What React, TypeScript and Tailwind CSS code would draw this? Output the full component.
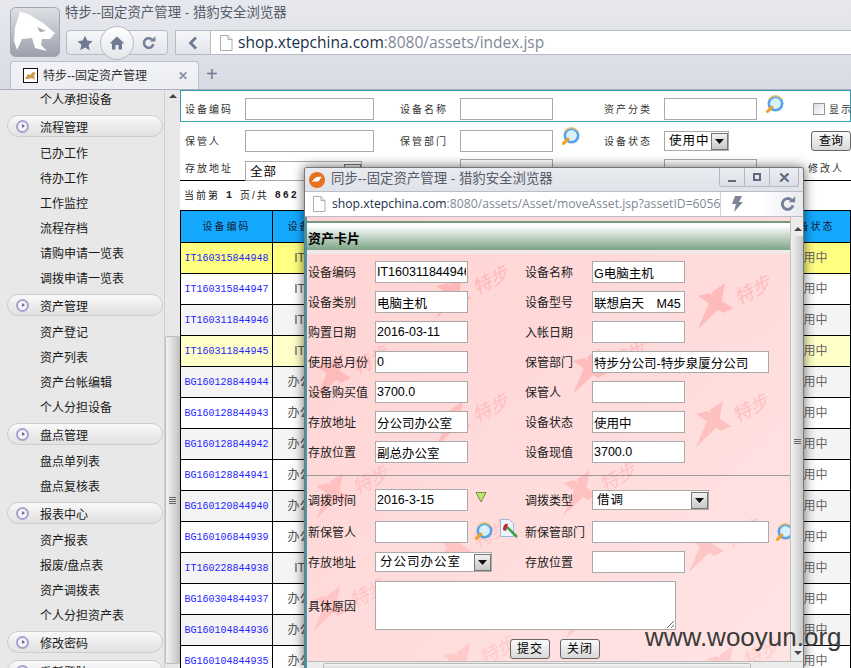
import { ReactNode } from "react";

const sidebar: { group?: boolean; label: string }[] = [
  { label: "个人承担设备" },
  { group: true, label: "流程管理" },
  { label: "已办工作" },
  { label: "待办工作" },
  { label: "工作监控" },
  { label: "流程存档" },
  { label: "请购申请一览表" },
  { label: "调拨申请一览表" },
  { group: true, label: "资产管理" },
  { label: "资产登记" },
  { label: "资产列表" },
  { label: "资产台帐编辑" },
  { label: "个人分担设备" },
  { group: true, label: "盘点管理" },
  { label: "盘点单列表" },
  { label: "盘点复核表" },
  { group: true, label: "报表中心" },
  { label: "资产报表" },
  { label: "报废/盘点表" },
  { label: "资产调拨表" },
  { label: "个人分担资产表" },
  { group: true, label: "修改密码" },
  { group: true, label: "重新登陆" },
];

const rows = [
  { id: "IT160315844948", type: "IT设备", bg: "bg-[#ffff80]" },
  { id: "IT160315844947", type: "IT设备", bg: "bg-white" },
  { id: "IT160311844946", type: "IT设备", bg: "bg-[#f4f4f4]" },
  { id: "IT160311844945", type: "IT设备", bg: "bg-[#ffffc8]" },
  { id: "BG160128844944", type: "办公设备", bg: "bg-[#f4f4f4]" },
  { id: "BG160128844943", type: "办公设备", bg: "bg-white" },
  { id: "BG160128844942", type: "办公设备", bg: "bg-[#f4f4f4]" },
  { id: "BG160128844941", type: "办公设备", bg: "bg-white" },
  { id: "BG160120844940", type: "办公设备", bg: "bg-[#f4f4f4]" },
  { id: "BG160106844939", type: "办公设备", bg: "bg-white" },
  { id: "IT160228844938", type: "IT设备", bg: "bg-[#f4f4f4]" },
  { id: "BG160304844937", type: "办公设备", bg: "bg-white" },
  { id: "BG160104844936", type: "办公设备", bg: "bg-[#f4f4f4]" },
  { id: "BG160104844935", type: "办公设备", bg: "bg-white" },
];

const marks = [
  [490, 280], [752, 290], [627, 355], [370, 360], [490, 408], [750, 408], [370, 480],
  [617, 477], [490, 533], [743, 533], [367, 593], [620, 600], [497, 650], [760, 653],
];

function FileIcon() {
  return (
    <svg width="14" height="16" viewBox="0 0 14 16" className="shrink-0">
      <path d="M1.5.5h7.5l4 4v11h-11.500z" fill="#fff" stroke="#a9adb6" />
      <path d="M9 .5v4h4" fill="#e8e9ed" stroke="#a9adb6" />
    </svg>
  );
}

function ReloadIcon({ size = 20 }: { size?: number }) {
  return (
    <svg width={size} height={size} viewBox="0 0 20 20">
      <path d="M15.500 11.500a6 6 0 1 1-1.800-6" fill="none" stroke="#75809a" strokeWidth="3.200" />
      <path d="M11 8h7V1.500z" fill="#75809a" />
    </svg>
  );
}

function SearchIcon() {
  return (
    <svg width="18" height="18" viewBox="0 0 18 18" className="shrink-0">
      <circle cx="9.500" cy="8.500" r="8" fill="#5aa2e8" />
      <circle cx="9.500" cy="8.500" r="5.400" fill="#d8f0fc" />
      <path d="M3 4a8 8 0 0 1 13 .5" fill="none" stroke="#f4c860" strokeWidth="1.300" />
      <path d="M6 12 1.500 16.500" stroke="#f0a020" strokeWidth="3" strokeLinecap="round" />
    </svg>
  );
}

function ArrowBox() {
  return (
    <span className="flex h-[17px] w-[17px] shrink-0 items-center justify-center border border-[#777] bg-gradient-to-b from-[#f2f2f2] to-[#c8c8c8]">
      <svg width="9" height="5" viewBox="0 0 9 5">
        <path d="M0 0h9L4.500 5z" fill="#111" />
      </svg>
    </span>
  );
}

function Select({ value, className }: { value: string; className: string }) {
  return (
    <div className={`flex items-center justify-between border border-[#aaa] bg-white pl-[4px] text-[12.500px] text-black ${className}`}>
      <span className="tracking-[1px]">{value}</span>
      <ArrowBox />
    </div>
  );
}

function FilterLabel({ children }: { children: ReactNode }) {
  return <span className="text-[10px] tracking-[2px] whitespace-nowrap text-[#333]">{children}</span>;
}

function FilterInput({ className = "w-[93px]" }: { className?: string }) {
  return <input readOnly className={`h-[22px] border border-[#aaa] bg-white ${className}`} />;
}

function Field({ value = "", className = "w-[93px]" }: { value?: string; className?: string }) {
  return (
    <input
      readOnly
      value={value}
      className={`h-[22px] border border-[#aaa] bg-white px-px text-[12.500px] text-black ${className}`}
    />
  );
}

function FormLabel({ children }: { children: ReactNode }) {
  return <span className="pt-[2px] text-[12px] whitespace-nowrap text-[#222]">{children}</span>;
}

function FormRow({ a, b, c, d }: { a: string; b: ReactNode; c: string; d: ReactNode }) {
  return (
    <div className="grid h-[30px] grid-cols-[67px_150px_67px_1fr] items-center">
      <FormLabel>{a}</FormLabel>
      <div className="flex items-center">{b}</div>
      <FormLabel>{c}</FormLabel>
      <div className="flex items-center">{d}</div>
    </div>
  );
}

function Button({ children }: { children: ReactNode }) {
  return (
    <button className="h-[20px] w-[40px] rounded-[3px] border border-[#666] bg-gradient-to-b from-[#fbfbfb] to-[#d8d8d8] text-[12px] tracking-[1px] text-black">
      {children}
    </button>
  );
}

function Sidebar() {
  return (
    <aside className="flex w-[180px] shrink-0 bg-[#e8e8e8]">
      <div className="w-[164px] shrink-0 overflow-hidden text-[12px] text-[#1a1a1a]">
        <div className="-mt-[4px]">
          {sidebar.map((s) =>
            s.group ? (
              <div key={s.label} className="pt-[4px] pb-[3px] pl-[7px]">
                <div className="flex h-[22px] w-[156px] items-center rounded-full border border-[#cdcdcd] bg-gradient-to-b from-[#fafafa] via-[#ececec] to-[#e2e2e2] pl-[8px]">
                  <span className="flex h-[13px] w-[13px] items-center justify-center rounded-full border-2 border-[#a8a2cf] bg-[#f4f4f8]">
                    <span className="ml-[1px] h-0 w-0 border-y-[2.500px] border-l-[3px] border-y-transparent border-l-[#6d6790]" />
                  </span>
                  <span className="ml-[11px] pt-[3px]">{s.label}</span>
                </div>
              </div>
            ) : (
              <div key={s.label} className="flex h-[25px] items-center pt-[2px] pl-[40px]">
                {s.label}
              </div>
            ),
          )}
        </div>
      </div>
      <div className="flex w-[16px] shrink-0 flex-col items-center border-l border-[#cfcfcf]">
        <div className="mt-[4px] h-0 w-0 border-x-[4px] border-b-[4px] border-x-transparent border-b-[#444]" />
        <div className="mt-[238px] flex h-[328px] w-[15px] flex-col items-center justify-center gap-[1px] rounded-[2px] border border-[#bdbdbd] bg-gradient-to-r from-[#f4f4f4] to-[#c4c4c4]">
          <span className="h-px w-[7px] bg-[#666]" />
          <span className="h-px w-[7px] bg-[#666]" />
          <span className="h-px w-[7px] bg-[#666]" />
          <span className="h-px w-[7px] bg-[#666]" />
        </div>
      </div>
    </aside>
  );
}

function Filters() {
  const grid = "grid grid-cols-[60px_155px_60px_144px_60px_149px_1fr] items-center";
  return (
    <div>
      <div className={`${grid} h-[32px] border border-[#3b9cb0] pt-[6px] pl-[4px]`}>
        <FilterLabel>设备编码</FilterLabel>
        <FilterInput className="w-[129px]" />
        <FilterLabel>设备名称</FilterLabel>
        <FilterInput />
        <FilterLabel>资产分类</FilterLabel>
        <div className="flex items-start gap-[9px]">
          <FilterInput />
          <div className="-mt-[3px]"><SearchIcon /></div>
        </div>
        <div className="flex items-center gap-[4px]">
          <span className="h-[12px] w-[12px] border border-[#999] bg-gradient-to-br from-[#ddd] to-white" />
          <FilterLabel>显示</FilterLabel>
        </div>
      </div>
      <div className={`${grid} h-[33px] pt-[5px] pl-[5px]`}>
        <FilterLabel>保管人</FilterLabel>
        <FilterInput className="w-[129px]" />
        <FilterLabel>保管部门</FilterLabel>
        <div className="flex items-start gap-[9px]">
          <FilterInput />
          <div className="-mt-[3px]"><SearchIcon /></div>
        </div>
        <FilterLabel>设备状态</FilterLabel>
        <Select value="使用中" className="h-[20px] w-[65px]" />
        <button className="ml-[-2px] h-[20px] w-[40px] rounded-[3px] border border-[#666] bg-gradient-to-b from-[#fbfbfb] to-[#d8d8d8] text-[12px] text-black">
          查询
        </button>
      </div>
      <div className={`${grid} h-[26px] items-end border-b border-black pl-[5px]`}>
        <div className="mb-[2px]"><FilterLabel>存放地址</FilterLabel></div>
        <Select value="全部" className="h-[20px] w-[117px] pt-[2px]" />
        <span />
        <FilterInput />
        <span />
        <FilterInput />
        <div className="mb-[2px] -ml-[5px]"><FilterLabel>修改人</FilterLabel></div>
      </div>
    </div>
  );
}

function AssetTable() {
  return (
    <table className="w-[671px] table-fixed border-collapse font-['Liberation_Sans','Noto_Sans_CJK_SC',sans-serif]">
      <colgroup>
        <col className="w-[92px]" />
        <col className="w-[78px]" />
        <col />
        <col className="w-[80px]" />
      </colgroup>
      <thead>
        <tr className="h-[32px] bg-[#14a9ff] text-[10px] tracking-[2px] text-[#123]">
          <th className="border border-black font-normal">设备编码</th>
          <th className="border border-black font-normal">设备名称</th>
          <th className="border border-black font-normal">规格型号</th>
          <th className="border border-black font-normal">设备状态</th>
        </tr>
      </thead>
      <tbody>
        {rows.map((r) => (
          <tr key={r.id} className={`h-[31px] text-center text-[12px] ${r.bg}`}>
            <td className="border border-black font-['Liberation_Mono',monospace] text-[10px] text-[#2424ff]">{r.id}</td>
            <td className="border border-black text-[#555]">{r.type}</td>
            <td className="border border-black" />
            <td className="border border-black pr-[2px] text-[#666]">使用中</td>
          </tr>
        ))}
      </tbody>
    </table>
  );
}

function Watermarks() {
  return (
    <svg className="absolute top-0 left-0" width="500" height="452" viewBox="306 216 500 452">
      {marks.map(([x, y]) => (
        <g key={`${x}-${y}`} transform={`translate(${x} ${y})`} fill="#ffa8a8" opacity={0.7 - ((y - 216) / 452) * 0.35}>
          <path d="M-55 5-44 2-20 17-30 22z" />
          <path d="M-41 1-28-8-32 13-40 8z" />
          <path d="M-44 12-55 38-34 18z" />
          <text
            transform="rotate(-28)"
            textAnchor="middle"
            x="0"
            y="6"
            fontSize="19"
            fontStyle="italic"
            fontFamily="Noto Sans CJK SC, sans-serif"
          >
            特步
          </text>
        </g>
      ))}
    </svg>
  );
}

function Popup() {
  return (
    <div className="absolute top-[167px] left-[304px] flex h-[501px] w-[500px] flex-col overflow-hidden rounded-t-[3px] border-x border-t border-[#777] bg-[#e5e7ec] shadow-[0_0_12px_rgba(0,0,0,0.6)]">
      <div className="flex h-[23px] shrink-0 items-center bg-gradient-to-b from-[#e9ebf0] to-[#e0e3e9]">
        <svg width="16" height="16" viewBox="0 0 16 16" className="ml-[4px]">
          <circle cx="8" cy="8" r="8" fill="#e8711d" />
          <path d="M3 10c2-5 6-6 10-5-2 1-2 3-3 4-2 1-4 0-7 1z" fill="#fff" />
        </svg>
        <span className="ml-[6px] text-[13.400px] whitespace-nowrap text-[#555b68]">同步--固定资产管理 - 猎豹安全浏览器</span>
        <div className="mr-[4px] ml-auto flex h-[19px] -translate-y-[2px] items-center rounded-b-[3px] border border-t-0 border-[#b4b8c2] bg-gradient-to-b from-[#eceef2] to-[#dcdfe6] text-[#5f6a80]">
          <span className="flex h-full w-[25px] items-end justify-center border-r border-[#b4b8c2] pb-[4px]">
            <span className="h-[2px] w-[8px] bg-[#5f6a80]" />
          </span>
          <span className="flex h-full w-[25px] items-center justify-center border-r border-[#b4b8c2]">
            <span className="h-[8px] w-[8px] border-2 border-[#5f6a80]" />
          </span>
          <span className="flex h-full w-[28px] items-center justify-center text-[15px] leading-none font-bold">✕</span>
        </div>
      </div>
      <div className="flex h-[26px] shrink-0 items-center border-y border-[#b9bdc7] bg-white pl-[7px]">
        <FileIcon />
        <div className="ml-[6px] w-[388px] overflow-hidden text-[12.200px] whitespace-nowrap font-['Open_Sans',sans-serif]">
          <span className="text-[#20304a]">shop.xtepchina.com</span>
          <span className="text-[#808898]">:8080/assets/Asset/moveAsset.jsp?assetID=6056</span>
        </div>
        <div className="flex h-full flex-1 items-center border-l border-[#d0d3da] bg-gradient-to-r from-white via-white to-[#e8eaef] pl-[10px]">
          <svg width="12" height="16" viewBox="0 0 12 16">
            <path d="M4 0h7L8 6h4L3 16l2-8H1z" fill="#7d8596" />
          </svg>
          <div className="mr-[6px] ml-auto"><ReloadIcon size={18} /></div>
        </div>
      </div>
      <div className="relative min-h-0 flex-1 overflow-hidden border-l-2 border-[#3b9cb0] bg-gradient-to-br from-[#ffd3d3] to-[#ffe4e4]">
        <Watermarks />
        <div className="relative flex h-full">
          <div className="w-[483px] shrink-0 text-[12px]">
            <div className="mt-[4px] flex h-[33px] items-end border-t-2 border-b-4 border-[#6f9a7c] border-b-[#f2e8e8] bg-gradient-to-b from-white from-10% to-[#7da487] pb-[2px] pl-[1px] text-[13px] font-bold text-black">
              资产卡片
            </div>
            <div className="mt-[3px] pl-[1px]">
              <FormRow a="设备编码" b={<Field value="IT160311844946" />} c="设备名称" d={<Field value="G电脑主机" />} />
              <FormRow a="设备类别" b={<Field value="电脑主机" />} c="设备型号" d={<Field value="联想启天　M45" />} />
              <FormRow a="购置日期" b={<Field value="2016-03-11" />} c="入帐日期" d={<Field />} />
              <FormRow a="使用总月份" b={<Field value="0" />} c="保管部门" d={<Field value="特步分公司-特步泉厦分公司" className="w-[177px]" />} />
              <FormRow a="设备购买值" b={<Field value="3700.0" />} c="保管人" d={<Field />} />
              <FormRow a="存放地址" b={<Field value="分公司办公室" />} c="设备状态" d={<Field value="使用中" />} />
              <FormRow a="存放位置" b={<Field value="副总办公室" />} c="设备现值" d={<Field value="3700.0" />} />
            </div>
            <div className="mt-[8px] h-px bg-[#999]" />
            <div className="mt-[9px] pl-[1px]">
              <FormRow
                a="调拨时间"
                b={
                  <>
                    <Field value="2016-3-15" />
                    <svg width="12" height="12" viewBox="0 0 12 12" className="mb-[6px] ml-[7px]">
                      <path d="M1 1.500h10L6 11z" fill="#c4e070" stroke="#6c9440" />
                    </svg>
                  </>
                }
                c="调拨类型"
                d={<Select value="借调" className="h-[20px] w-[117px]" />}
              />
              <div className="mt-[2px]">
                <FormRow
                  a="新保管人"
                  b={
                    <>
                      <Field />
                      <span className="mb-[2px] ml-[7px]"><SearchIcon /></span>
                      <svg width="18" height="20" viewBox="0 0 18 20" className="mb-[6px] ml-[7px]">
                        <path d="M.5.5h9l4 4v13H.5z" fill="#eef4fc" stroke="#9bb8da" />
                        <path d="M3 11c0-5 2-7 5-6l-2 7z" fill="#c8242c" />
                        <path d="M7 8 17 18" stroke="#3aa040" strokeWidth="2.500" />
                      </svg>
                    </>
                  }
                  c="新保管部门"
                  d={
                    <>
                      <Field className="w-[177px]" />
                      <span className="ml-[7px]"><SearchIcon /></span>
                    </>
                  }
                />
              </div>
              <FormRow
                a="存放地址"
                b={<Select value="分公司办公室" className="h-[20px] w-[117px]" />}
                c="存放位置"
                d={<Field />}
              />
              <div className="mt-[4px] grid grid-cols-[67px_1fr] items-center">
                <FormLabel>具体原因</FormLabel>
                <textarea readOnly className="h-[49px] w-[301px] border border-[#aaa] bg-white" />
              </div>
              <div className="mt-[9px] flex gap-[10px] pl-[202px]">
                <Button>提交</Button>
                <Button>关闭</Button>
              </div>
            </div>
          </div>
          <div className="flex w-[15px] shrink-0 flex-col items-center border-x border-[#c0c0c0] bg-[#ececec]">
            <div className="mt-[10px] h-0 w-0 border-x-[4px] border-b-[4px] border-x-transparent border-b-[#444]" />
            <div className="mt-[5px] flex h-[410px] w-full flex-col items-center justify-center gap-[1px] bg-gradient-to-r from-[#f2f2f2] to-[#c2c2c2]">
              <span className="h-px w-[7px] bg-[#666]" />
              <span className="h-px w-[7px] bg-[#666]" />
              <span className="h-px w-[7px] bg-[#666]" />
            </div>
            <div className="mt-[5px] h-0 w-0 border-x-[4px] border-t-[4px] border-x-transparent border-t-[#444]" />
          </div>
        </div>
        <div className="absolute right-0 bottom-0 left-0 flex h-[7px] items-start border-t border-[#bbb] bg-[#ececec]">
          <div className="mt-[1px] ml-[16px] h-[8px] w-[428px] rounded-[2px] border border-[#bbb] bg-gradient-to-b from-[#f6f6f6] to-[#d4d4d4]" />
        </div>
      </div>
    </div>
  );
}

export default function App() {
  return (
    <div className="relative flex h-[668px] w-[851px] flex-col overflow-hidden bg-white font-['Liberation_Sans','Noto_Sans_CJK_SC',sans-serif]">
      <header className="h-[90px] shrink-0 border-b border-[#a7aebe] bg-gradient-to-b from-[#e8e9ee] to-[#d8dbe3]">
        <div className="flex h-[61px] pt-[7px] pl-[10px]">
          <svg width="50" height="50" viewBox="0 0 50 50" className="shrink-0">
            <defs>
              <linearGradient id="logo" x1="0" y1="0" x2="0" y2="1">
                <stop offset="0" stopColor="#dfe1e6" />
                <stop offset="1" stopColor="#9b9fab" />
              </linearGradient>
            </defs>
            <rect x=".5" y=".5" width="49" height="49" rx="5" fill="url(#logo)" stroke="#a2a6b0" />
            <path d="M10 4.500 20 8 33 16 45 26 40 32 32 32 31 38 37 44 25 41 22 31 12 32 7 43 4 34 5 21z" fill="#fff" />
            <path d="M27 20 36 24 30 25z" fill="#a5a9b4" />
          </svg>
          <div className="ml-[5px] flex flex-col">
            <div className="mt-[-1px] h-[24px] text-[13.400px] leading-[14px] whitespace-nowrap text-[#555b68]">
              特步--固定资产管理 - 猎豹安全浏览器
            </div>
            <div className="flex">
              <div className="relative ml-[1px] flex h-[25px] w-[102px] items-center justify-between rounded-[4px] border border-[#b6bac5] bg-gradient-to-b from-[#f6f7f9] to-[#e3e5eb] px-[10px]">
                <svg width="16" height="16" viewBox="0 0 24 24">
                  <path d="m12 1 3.400 7.400 8 .9-6 5.400 1.700 8L12 18.700 4.900 22.700l1.700-8-6-5.400 8-.9z" fill="#6f7a91" />
                </svg>
                <div className="absolute top-[-5px] left-[33px] flex h-[34px] w-[34px] items-center justify-center rounded-full border border-[#b6bac5] bg-gradient-to-b from-white to-[#e4e6eb]">
                  <svg width="14" height="14" viewBox="0 0 14 14">
                    <path d="M7 .5 14 7l-1 1-1-1v6.500H8.500V9h-3v4.500H2V7L1 8 0 7z" fill="#6f7a91" />
                  </svg>
                </div>
                <ReloadIcon size={16} />
              </div>
              <div className="ml-[7px] flex h-[25px] w-[676px] items-center border-y border-l border-[#b6bac5] bg-white">
                <div className="flex h-full w-[35px] shrink-0 items-center justify-center border-r border-[#b6bac5] bg-gradient-to-b from-[#f6f7f9] to-[#e3e5eb]">
                  <svg width="10" height="14" viewBox="0 0 10 14">
                    <path d="M8 1.500 2.500 7 8 12.500" fill="none" stroke="#6f7a91" strokeWidth="2.800" />
                  </svg>
                </div>
                <div className="ml-[8px]"><FileIcon /></div>
                <span className="ml-[5px] text-[15.500px] whitespace-nowrap font-['Open_Sans',sans-serif]">
                  <span className="text-[#20304a]">shop.xtepchina.com</span>
                  <span className="text-[#808898]">:8080/assets/index.jsp</span>
                </span>
              </div>
            </div>
          </div>
        </div>
        <div className="flex h-[28px] items-end pl-[10px]">
          <div className="flex h-[28px] w-[189px] items-center rounded-t-[4px] border-x border-t border-[#bcc1cc] bg-gradient-to-b from-[#f2f3f6] to-[#eceef2] pl-[12px]">
            <svg width="15" height="15" viewBox="0 0 15 15" className="shrink-0">
              <rect x=".5" y=".5" width="14" height="14" fill="#fff" stroke="#111" />
              <path d="M2 11 5 6l2 1 3-3 3 1-2 2 1 5-3-2-4 1z" fill="#c89a4a" />
            </svg>
            <span className="ml-[5px] text-[12px] whitespace-nowrap text-[#333]">特步--固定资产管理</span>
            <span className="mr-[10px] ml-auto text-[12px] font-bold text-[#8a90a0]">✕</span>
          </div>
          <span className="mb-[3px] ml-[7px] text-[20px] leading-[24px] text-[#6f7a91]">+</span>
        </div>
      </header>

      <div className="flex min-h-0 flex-1">
        <Sidebar />
        <main className="min-w-0 flex-1 overflow-hidden bg-white">
          <Filters />
          <div className="flex h-[29px] items-center pl-[4px] text-[10px] tracking-[2px] whitespace-nowrap text-[#222]">
            当前第 <b className="mx-[6px] font-['Liberation_Mono',monospace]">1</b> 页/共 <b className="mx-[6px] font-['Liberation_Mono',monospace]">862</b> 页
          </div>
          <AssetTable />
        </main>
      </div>

      <Popup />

      <div className="absolute top-[618px] left-[645px] text-[26px] whitespace-nowrap text-[#3a3a3a]">www.wooyun.org</div>
    </div>
  );
}
